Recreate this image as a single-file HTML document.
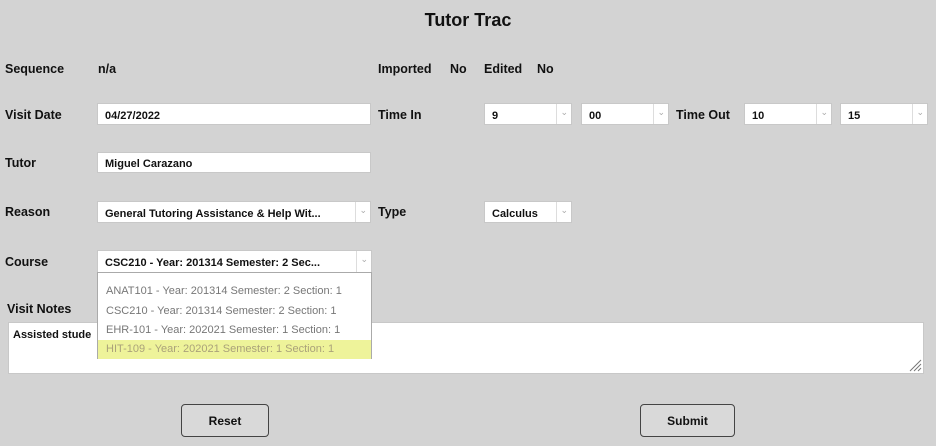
<!DOCTYPE html>
<html><head><style>
body{margin:0;width:936px;height:446px;background:#d3d3d3;font-family:"Liberation Sans",sans-serif;position:relative;overflow:hidden;color:#111}
.a{position:absolute;white-space:nowrap}
.l{font-weight:bold;font-size:12.5px}
.in{position:absolute;background:#fff;border:1px solid #c8c8c8;box-sizing:border-box;font-size:11px;font-weight:bold;padding-left:7px;padding-top:1px;line-height:22px;white-space:nowrap;overflow:hidden}
.sel:after{content:"";position:absolute;right:0;top:0;width:14px;height:100%;border-left:1px solid #ddd;background:#fff}
.sel:before{content:"\2304";position:absolute;right:3px;top:-3px;font-size:9px;color:#aaa;z-index:2;font-weight:normal}
.btn{position:absolute;border:1px solid #444;border-radius:4px;background:#d9d9d9;font-size:12px;font-weight:bold;text-align:center;box-sizing:border-box;line-height:33px}
.it{position:absolute;left:0;width:100%;height:19px;line-height:19px;padding-left:8px;box-sizing:border-box;color:#777;font-size:11px}
</style></head><body>
<div class="a" style="left:0;width:936px;text-align:center;top:10px;font-size:18px;font-weight:bold">Tutor Trac</div>
<div class="a l" style="left:5px;top:62px">Sequence</div>
<div class="a l" style="left:98px;top:62px">n/a</div>
<div class="a l" style="left:378px;top:62px">Imported</div>
<div class="a l" style="left:450px;top:62px">No</div>
<div class="a l" style="left:484px;top:62px">Edited</div>
<div class="a l" style="left:537px;top:62px">No</div>
<div class="a l" style="left:5px;top:108px">Visit Date</div>
<div class="in" style="left:97px;top:103px;width:274px;height:22px">04/27/2022</div>
<div class="a l" style="left:378px;top:108px">Time In</div>
<div class="in sel" style="left:484px;top:103px;width:88px;height:22px">9</div>
<div class="in sel" style="left:581px;top:103px;width:88px;height:22px">00</div>
<div class="a l" style="left:676px;top:108px">Time Out</div>
<div class="in sel" style="left:744px;top:103px;width:88px;height:22px">10</div>
<div class="in sel" style="left:840px;top:103px;width:88px;height:22px">15</div>
<div class="a l" style="left:5px;top:156px">Tutor</div>
<div class="in" style="left:97px;top:152px;width:274px;height:21px;line-height:20px">Miguel Carazano</div>
<div class="a l" style="left:5px;top:205px">Reason</div>
<div class="in sel" style="left:97px;top:201px;width:274px;height:22px">General Tutoring Assistance &amp; Help Wit...</div>
<div class="a l" style="left:378px;top:205px">Type</div>
<div class="in sel" style="left:484px;top:201px;width:88px;height:22px">Calculus</div>
<div class="a l" style="left:5px;top:255px">Course</div>
<div class="a l" style="left:7px;top:302px">Visit Notes</div>
<div class="in" style="left:8px;top:322px;width:916px;height:52px;line-height:22px;padding-left:4px">Assisted stude</div>
<svg style="position:absolute;left:908px;top:359px" width="14" height="13"><path d="M2 12L13 1M6 12L13 5M10 12L13 9" stroke="#777" stroke-width="1"/></svg>
<div class="in sel" style="left:97px;top:250px;width:275px;height:23px">CSC210 - Year: 201314 Semester: 2 Sec...</div>
<div style="position:absolute;left:97px;top:272px;width:275px;height:87px;background:#fff;border:1px solid #aaa;box-sizing:border-box">
<div class="it" style="top:9px">ANAT101 - Year: 201314 Semester: 2 Section: 1</div>
<div class="it" style="top:29px">CSC210 - Year: 201314 Semester: 2 Section: 1</div>
<div class="it" style="top:48px">EHR-101 - Year: 202021 Semester: 1 Section: 1</div>
<div class="it" style="top:67px;background:#eef39a;color:#aaa27a">HIT-109 - Year: 202021 Semester: 1 Section: 1</div>
</div>
<div class="btn" style="left:181px;top:404px;width:88px;height:33px">Reset</div>
<div class="btn" style="left:640px;top:404px;width:95px;height:33px">Submit</div>
</body></html>
